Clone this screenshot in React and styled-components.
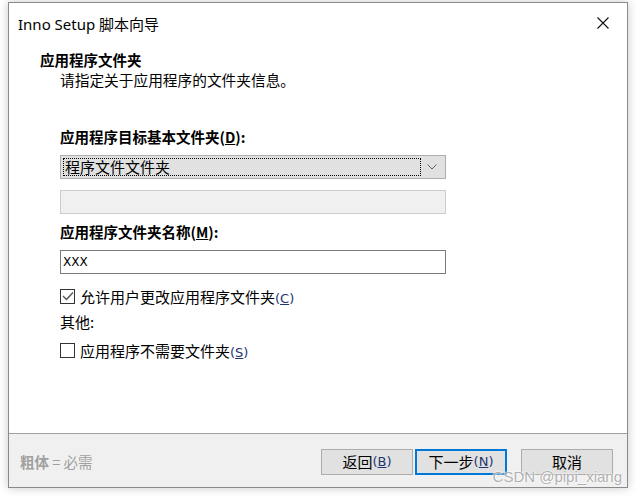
import styled, { createGlobalStyle } from 'styled-components';

const Global = createGlobalStyle`
  html, body { margin: 0; padding: 0; background: #ffffff; }
  body {
    width: 636px;
    height: 496px;
    overflow: hidden;
    font-family: "Segoe UI", "Noto Sans", "Noto Sans CJK SC", sans-serif;
    color: #000;
  }
`;

const Window = styled.div`
  box-sizing: border-box;
  margin: 2px 0 0 8px;
  width: 620px;
  height: 486px;
  border: 1px solid #8a8a8a;
  background: #fff;
  box-shadow: 0 0 9px rgba(0, 0, 0, 0.22);
  display: flex;
  flex-direction: column;
  position: relative;
`;

const TitleBar = styled.div`
  height: 40px;
  display: flex;
  align-items: center;
  justify-content: space-between;
  padding: 0 18px 0 9px;
  font-size: 15px;
`;

const TitleText = styled.span`
  font-family: "Noto Sans", "Noto Sans CJK SC", sans-serif;
  font-size: 15px;
  color: #000;
`;

const Body = styled.div`
  flex: 1;
  padding: 7px 0 0 31px;
  font-family: "Noto Sans CJK SC", sans-serif;
`;

const Heading = styled.div`
  font-size: 14.5px;
  font-weight: 700;
  line-height: 20px;
`;

const SubTitle = styled.div`
  font-size: 14.7px;
  line-height: 20px;
  padding-left: 20px;
`;

const Form = styled.div`
  padding-left: 20px;
  width: 386px;
  display: flex;
  flex-direction: column;
`;

const Label = styled.div`
  font-size: 14.5px;
  font-weight: 700;
  line-height: 20px;
  margin-top: ${(p) => p.$top}px;
`;

const Key = styled.span`
  text-decoration: underline;
`;

const Combo = styled.div`
  box-sizing: border-box;
  margin-top: 8px;
  height: 24px;
  background: #e1e1e1;
  border: 1px solid #adadad;
  display: flex;
  align-items: center;
  padding: 2px;
`;

const ComboValue = styled.div`
  box-sizing: border-box;
  flex: 0 0 358px;
  height: 18px;
  border: 1px dotted #000;
  font-size: 15px;
  line-height: 16px;
  padding-left: 1px;
`;

const Chevron = styled.div`
  flex: 1;
  display: flex;
  justify-content: center;
  color: #606060;
`;

const Edit = styled.div`
  box-sizing: border-box;
  margin-top: ${(p) => p.$top}px;
  height: 24px;
  border: 1px solid ${(p) => (p.$disabled ? '#cccccc' : '#7a7a7a')};
  background: ${(p) => (p.$disabled ? '#f0f0f0' : '#ffffff')};
  font-family: "DejaVu Sans", "Noto Sans", sans-serif;
  font-size: 12px;
  line-height: 22px;
  padding-left: 2px;
  color: #000;
`;

const CheckRow = styled.label`
  display: flex;
  align-items: center;
  gap: 5px;
  margin-top: ${(p) => p.$top}px;
  height: 20px;
  font-size: 15px;
`;

const Box = styled.span`
  box-sizing: border-box;
  width: 15px;
  height: 15px;
  border: 1px solid #333;
  background: #fff;
  display: flex;
  align-items: center;
  justify-content: center;
`;

const Mnemonic = styled.span`
  font-family: "DejaVu Sans", "Noto Sans", sans-serif;
  font-size: 13px;
  color: #1e3570;
`;

const Plain = styled.div`
  margin-top: 6px;
  font-size: 15px;
  line-height: 20px;
`;

const Footer = styled.div`
  height: 54px;
  box-sizing: border-box;
  border-top: 1px solid #a0a0a0;
  background: #f0f0f0;
  display: flex;
  align-items: flex-start;
  padding: 15px 14px 0 11px;
  font-family: "Noto Sans CJK SC", sans-serif;
`;

const Hint = styled.div`
  flex: 1;
  height: 26px;
  line-height: 26px;
  font-size: 14.5px;
  color: #a0a0a0;
  b { font-weight: 700; }
`;

const Button = styled.button`
  box-sizing: border-box;
  width: 92px;
  height: 26px;
  margin-left: ${(p) => p.$gap || 0}px;
  background: #e1e1e1;
  border: ${(p) => (p.$default ? '2px solid #0078d7' : '1px solid #adadad')};
  font-family: "Noto Sans CJK SC", sans-serif;
  font-size: 15px;
  line-height: 20px;
  color: #000;
  padding: 0;
  display: flex;
  align-items: center;
  justify-content: center;
`;

const Watermark = styled.div`
  position: absolute;
  right: 5px;
  bottom: 1px;
  font-family: "Liberation Sans", Arial, sans-serif;
  font-size: 15px;
  line-height: 18px;
  color: rgba(150, 150, 150, 0.75);
  text-shadow: 0 0 2px #fff, 0 0 2px #fff;
`;

const Check = () => (
  <svg width="12" height="10" viewBox="0 0 12 10">
    <path d="M1 5 L4.5 8.5 L11 1.5" fill="none" stroke="#555" strokeWidth="1.4" />
  </svg>
);

export default function App() {
  return (
    <>
      <Global />
      <Window>
        <TitleBar>
          <TitleText>Inno Setup 脚本向导</TitleText>
          <svg width="12" height="12" viewBox="0 0 12 12">
            <path d="M0.5 0.5 L11.5 11.5 M11.5 0.5 L0.5 11.5" stroke="#111" strokeWidth="1.1" />
          </svg>
        </TitleBar>
        <Body>
          <Heading>应用程序文件夹</Heading>
          <SubTitle>请指定关于应用程序的文件夹信息。</SubTitle>
          <Form>
            <Label $top={37}>
              应用程序目标基本文件夹(<Key>D</Key>):
            </Label>
            <Combo>
              <ComboValue>程序文件文件夹</ComboValue>
              <Chevron>
                <svg width="10" height="6" viewBox="0 0 10 6">
                  <path d="M0.5 0.5 L5 5 L9.5 0.5" fill="none" stroke="#606060" strokeWidth="1" />
                </svg>
              </Chevron>
            </Combo>
            <Edit $disabled $top={11} />
            <Label $top={8}>
              应用程序文件夹名称(<Key>M</Key>):
            </Label>
            <Edit $top={8}>XXX</Edit>
            <CheckRow $top={12}>
              <Box>
                <Check />
              </Box>
              <span>
                允许用户更改应用程序文件夹<Mnemonic>(<Key>C</Key>)</Mnemonic>
              </span>
            </CheckRow>
            <Plain>其他:</Plain>
            <CheckRow $top={8}>
              <Box />
              <span>
                应用程序不需要文件夹<Mnemonic>(<Key>S</Key>)</Mnemonic>
              </span>
            </CheckRow>
          </Form>
        </Body>
        <Footer>
          <Hint>
            <b>粗体</b> = 必需
          </Hint>
          <Button>
            返回<Mnemonic>(<Key>B</Key>)</Mnemonic>
          </Button>
          <Button $default $gap={2}>
            下一步<Mnemonic>(<Key>N</Key>)</Mnemonic>
          </Button>
          <Button $gap={14}>取消</Button>
        </Footer>
        <Watermark>CSDN @pipi_xiang</Watermark>
      </Window>
    </>
  );
}
